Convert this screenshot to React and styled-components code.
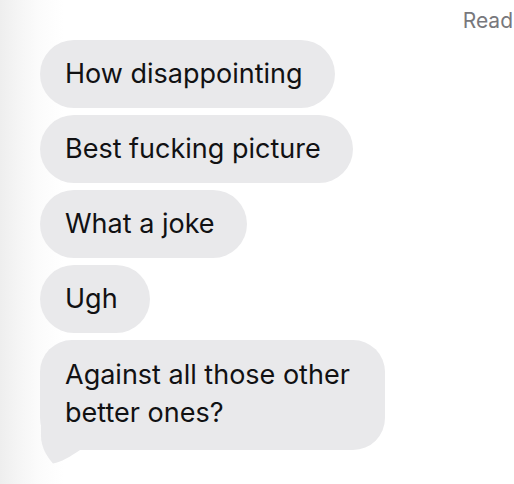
import React from "react";
import styled, { createGlobalStyle } from "styled-components";

const GlobalStyle = createGlobalStyle`
  html, body {
    margin: 0;
    padding: 0;
  }
  body {
    background: linear-gradient(to right, #eeeeee 0px, #f5f5f5 18px, #fbfbfb 38px, #ffffff 64px);
    font-family: Inter, "Noto Sans", sans-serif;
    min-height: 484px;
  }
`;

const Screen = styled.div`
  width: 514px;
  height: 484px;
  overflow: hidden;
  display: flex;
  flex-direction: column;
`;

const Status = styled.div`
  padding: 9px 1px 0 0;
  text-align: right;
  font-size: 21px;
  line-height: 24px;
  color: #78787c;
`;

const Thread = styled.div`
  display: flex;
  flex-direction: column;
  align-items: flex-start;
  gap: 7px;
  padding: 7px 0 0 40px;
`;

const Bubble = styled.div`
  position: relative;
  isolation: isolate;
  box-sizing: border-box;
  max-width: ${(p) => (p.$multi ? "345px" : "none")};
  padding: ${(p) => (p.$multi ? "16px 32px 18px 25px" : "15px 32px 15px 25px")};
  border-radius: ${(p) => (p.$multi ? "32px" : "34px")};
  background: #e9e9eb;
  color: #111113;
  font-size: 27px;
  line-height: 38px;
  white-space: ${(p) => (p.$multi ? "normal" : "nowrap")};
`;

const Tail = styled.svg`
  position: absolute;
  z-index: -1;
  left: 0;
  bottom: -14px;
  width: 44px;
  height: 44px;
`;

const messages = [
  "How disappointing",
  "Best fucking picture",
  "What a joke",
  "Ugh",
];

const App = () => {
  return (
    <>
      <GlobalStyle />
      <Screen>
        <Status>Read</Status>
        <Thread>
          {messages.map((m) => (
            <Bubble key={m}>{m}</Bubble>
          ))}
          <Bubble $multi>
            Against all those other better ones?
            <Tail viewBox="0 -30 44 44">
              <path
                d="M1 -30 L1 -14 C1 -2 8 8 13 13.5 C21 12 30 7 40 0 L40 -30 Z"
                fill="#e9e9eb"
              />
            </Tail>
          </Bubble>
        </Thread>
      </Screen>
    </>
  );
};

export default App;
